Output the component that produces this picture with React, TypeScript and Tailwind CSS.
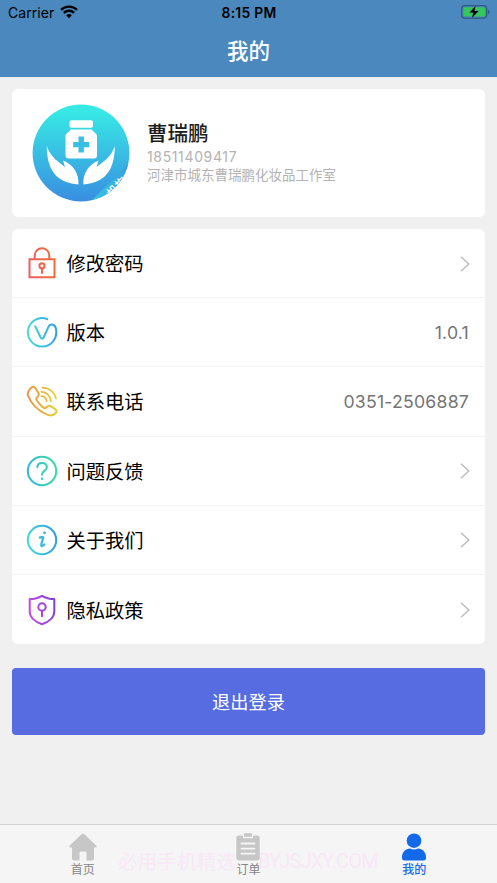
import { type ReactNode } from 'react'

const FONT = "font-['Inter','Noto_Sans_CJK_SC',sans-serif]"

function StatusBar() {
  return (
    <div className="grid h-[25px] grid-cols-3 items-center pl-[8px] pr-[7px] text-black">
      <div className="flex items-center gap-[6px] text-[14px] tracking-[0.05px]">
        <span>Carrier</span>
        <svg className="-mt-px" width="18" height="14" viewBox="0 0 18 14" fill="none" stroke="#000" strokeWidth="2.3">
          <path d="M1 4.8a11.6 11.6 0 0 1 16 0" />
          <path d="M3.8 7.8a7.6 7.6 0 0 1 10.4 0" />
          <path d="M9 13.2 6.2 10.3a4.2 4.2 0 0 1 5.6 0z" fill="#000" stroke="none" />
        </svg>
      </div>
      <div className="pt-[2px] text-center text-[13.8px] font-semibold tracking-[0.3px]">8:15 PM</div>
      <svg className="-mt-px justify-self-end" width="29" height="14" viewBox="0 0 29 14">
        <rect x="0.7" y="0.7" width="25" height="12.4" rx="3.4" fill="none" stroke="#2f5a83" strokeWidth="1.2" />
        <rect x="2.4" y="2.3" width="21.6" height="9.2" rx="1.9" fill="#35c759" />
        <path d="M27 4.7c2 .7 2 3.7 0 4.4z" fill="#2f5a83" />
        <path d="M14.6.8 8.7 7.5h3.8L10.9 13l6.5-7h-4z" fill="#000" stroke="#4a88be" strokeWidth=".8" paintOrder="stroke" />
      </svg>
    </div>
  )
}

function Avatar() {
  return (
    <svg className="shrink-0" width="98" height="98" viewBox="0 0 98 98">
      <defs>
        <linearGradient id="avatar" x1="0" y1="0" x2="0" y2="1">
          <stop offset="0.08" stopColor="#37e8e5" />
          <stop offset="1" stopColor="#398de1" />
        </linearGradient>
        <linearGradient id="ribbon" x1="0" y1="1" x2="1" y2="0">
          <stop stopColor="#35c8e4" />
          <stop offset="0.9" stopColor="#389fe0" />
        </linearGradient>
        <clipPath id="disc">
          <circle cx="49" cy="49" r="48.4" />
        </clipPath>
      </defs>
      <g clipPath="url(#disc)">
        <rect width="98" height="98" fill="url(#avatar)" />
        <path d="M58 98 98 58v40z" fill="url(#ribbon)" />
        <text x="79.5" y="94" transform="rotate(-45 79.5 94)" fill="#fff" fontSize="11.5" fontWeight="500">
          机构
        </text>
      </g>
      <rect x="37.5" y="16.3" width="23.5" height="7.5" rx="2" fill="#fff" />
      <path d="M38.5 25.5h21.500c.5 2 5 3.500 5 6.500v19.500q0 3-3 3H36.500q-3 0-3-3V32c0-3 4.500-4.500 5-6.500z" fill="#fff" />
      <path d="M46.5 32.6h5.400v5.300h5.300v5.300h-5.300v5.300h-5.400v-5.300h-5.300v-5.300h5.300z" fill="#39bee4" />
      <path d="M14.8 42c0 23 9 37 31.700 38.500.5-11-5-20-15.500-24l2 6.500C27 58 19 54 14.800 42z" fill="#fff" />
      <path d="M82.8 42c0 23-9 37-31.500 38.500-.5-11 5-20 15.300-24l-2 6.500C70.600 58 78.600 54 82.800 42z" fill="#fff" />
    </svg>
  )
}

function RowIcon({ id, from, to, children }: { id: string; from: string; to: string; children: ReactNode }) {
  return (
    <svg
      className="shrink-0"
      width="32"
      height="32"
      viewBox="0 0 32 32"
      fill="none"
      stroke={`url(#${id})`}
      strokeWidth="2"
      strokeLinecap="round"
      strokeLinejoin="round"
    >
      <defs>
        <linearGradient id={id} gradientUnits="userSpaceOnUse" x1="2" y1="18" x2="30" y2="14">
          <stop stopColor={from} />
          <stop offset="1" stopColor={to} />
        </linearGradient>
      </defs>
      {children}
    </svg>
  )
}

const ROWS: { label: string; value?: string; icon: ReactNode }[] = [
  {
    label: '修改密码',
    icon: (
      <RowIcon id="lock" from="#ef5d60" to="#ef6c35">
        <path d="M3.5 12.2h25v18h-25z" strokeLinejoin="miter" />
        <path d="M8.7 12V8.500a7.300 7.300 0 0 1 14.600 0V12" />
        <circle cx="16" cy="18.8" r="2.6" />
        <path d="M16 21.5v4.600" />
      </RowIcon>
    ),
  },
  {
    label: '版本',
    value: '1.0.1',
    icon: (
      <RowIcon id="version" from="#48ddd5" to="#31a0e8">
        <path d="M21.200 3.100A14.200 14.200 0 1 0 30.100 14c-.4-5.800-5.800-7.300-7.900-2.600L17.700 21.300q-1.600 3-3.200 0L9.200 10.200" />
      </RowIcon>
    ),
  },
  {
    label: '联系电话',
    value: '0351-2506887',
    icon: (
      <RowIcon id="phone" from="#ee8f49" to="#e3d333">
        <path d="M4.300 3.700c2-2.300 3.500-2.600 5-.6l3 4.700c1 1.700.6 2.900-1 4.200-1.400 1.100-1.200 2.200-.2 3.800 1.800 2.800 3.400 4.600 6 6.600 1.500 1.100 2.600 1 3.800-.4 1.300-1.500 2.500-1.700 4.200-.7l4.400 3c1.700 1.200 1.600 2.400-.2 4.100-2.400 2.300-4.800 2.700-8.200 1.300C11.500 25.500 5.300 19.200 2 10.500c-.9-2.600.4-4.700 2.300-6.800z" />
        <path d="M15.500 11.100c2.900.2 4.900 2.200 5.100 5M15.500 6.900c5.300.2 8.900 4 9.300 9.200M16.500 2.700c6.900.2 12.200 4.500 13.500 10.900" strokeWidth="1.7" />
      </RowIcon>
    ),
  },
  {
    label: '问题反馈',
    icon: (
      <RowIcon id="help" from="#35b9d8" to="#35dda0">
        <circle cx="16" cy="16" r="14.2" />
        <path d="M11.300 12.200c.2-2.800 2-4.300 4.700-4.300s4.900 1.700 4.900 4.200c0 3.900-4.900 3.700-4.900 7.600" />
        <path d="M16 23.700v.3" strokeWidth="2.2" />
      </RowIcon>
    ),
  },
  {
    label: '关于我们',
    icon: (
      <RowIcon id="about" from="#42d9d9" to="#2d9ee0">
        <circle cx="16" cy="16" r="14.2" />
        <path d="M18.500 8.800h.1" strokeWidth="2.8" />
        <path d="M13.900 13.500c1.600-.2 3-.7 3.300-.3.400.6-2.200 6.300-2 8.100.2 1.300 2 .6 3.100-.9" strokeWidth="2.3" />
      </RowIcon>
    ),
  },
  {
    label: '隐私政策',
    icon: (
      <RowIcon id="privacy" from="#cb48e8" to="#7c43d3">
        <path d="M16 1.800c3.600 2.300 7.800 3.300 12.300 3.300v12.100c0 6-5.300 10.800-12.300 13.100-7-2.300-12.300-7.100-12.300-13.100V5.100c4.500 0 8.700-1 12.300-3.300z" />
        <circle cx="16" cy="13" r="3.7" />
        <path d="M16 16.700v5.600" />
      </RowIcon>
    ),
  },
]

function Chevron() {
  return (
    <svg className="-mr-px" width="10" height="16" viewBox="0 0 10 16" fill="none" stroke="#bdbdbd" strokeWidth="1.5">
      <path d="m1 .8 7.800 7.200L1 15.200" />
    </svg>
  )
}

function TabBar() {
  return (
    <nav className="relative h-[59.5px] border-t border-[#d2d2d2] bg-[#f5f5f5]">
      {/* Faint site mark behind the tabs */}
      <div className="absolute left-[118px] top-[23px] flex gap-[22px] whitespace-nowrap text-[19.7px] leading-[28px] text-[#f9e8f6]">
        <span>必用手机精选</span>
        <span className="font-['Roboto',sans-serif] text-[19.5px] tracking-[-0.55px]">BYJSJXY.COM</span>
      </div>
      <div className="relative grid h-full grid-cols-3 pt-[8px] text-[12px] leading-[16px] text-[#858585]">
        <div className="flex flex-col items-center gap-[1.5px]">
          <svg width="28" height="28" viewBox="0 0 28 28" fill="#c7c7c7">
            <path d="M12.600 1.300q1.400-1.200 2.800 0l11.800 11.300q1.200 2-1 2H25v10.900q0 2-2 2h-5.500V20q0-1.500-1.500-1.500h-4q-1.500 0-1.500 1.500v7.500H5q-2 0-2-2V14.600H1.800q-2.200 0-1-2z" />
          </svg>
          <span>首页</span>
        </div>
        <div className="flex flex-col items-center gap-[1.5px]">
          <svg width="24" height="28" viewBox="0 0 24 28" fill="#c7c7c7">
            <path d="M3 2.600h4v1.600q0 1 1 1h8q1 0 1-1V2.600h4q2.700 0 2.700 2.700v19.500q0 2.700-2.700 2.700H3q-2.700 0-2.700-2.700V5.300q0-2.700 2.700-2.700z" />
            <rect x="8" y=".3" width="8" height="3.4" rx=".6" />
            <path d="M5.500 10.500h13M5.500 15.700h13M5.500 20.700h13" stroke="#f5f5f5" strokeWidth="1.8" strokeLinecap="round" />
          </svg>
          <span>订单</span>
        </div>
        <div className="flex flex-col items-center gap-[1.5px] font-medium text-[#1269ea]">
          <svg width="24" height="28" viewBox="0 0 24 28" fill="#1269ea">
            <circle cx="12" cy="7.7" r="7.3" />
            <path d="M8 15.500c2.500 1.300 5.500 1.300 8 0 4.500 0 8 4 8 8.500v1q0 2.500-2.500 2.500h-19Q0 27.500 0 25v-1c0-4.500 3.500-8.500 8-8.500z" />
          </svg>
          <span>我的</span>
        </div>
      </div>
    </nav>
  )
}

export default function App() {
  return (
    <div className={`flex h-[883px] w-[497px] flex-col overflow-hidden bg-[#f0f0f0] ${FONT}`}>
      <header className="h-[77px] shrink-0 bg-[#4a88be]">
        <StatusBar />
        <h1 className="text-center text-[21.5px] font-medium leading-[52px] text-white">我的</h1>
      </header>

      <main className="flex flex-1 flex-col px-3 pt-3">
        <section className="flex h-[128px] items-center rounded-md bg-white pl-5">
          <Avatar />
          <div className="ml-[17px] flex flex-col pb-[2px]">
            <h2 className="text-[20.5px] font-medium leading-[27px] text-[#1c1c1c]">曹瑞鹏</h2>
            <p className="text-[14px] leading-[19px] tracking-[0.64px] text-[#b3b3b3]">18511409417</p>
            <p className="text-[13.5px] leading-[19px] text-[#b3b3b3]">河津市城东曹瑞鹏化妆品工作室</p>
          </div>
        </section>

        <ul className="mt-3 rounded-md bg-white">
          {ROWS.map(({ label, value, icon }) => (
            <li
              key={label}
              className="flex h-[69.2px] items-center border-b border-[#f3f3f3] pl-[13.5px] pr-4 last:border-b-0"
            >
              {icon}
              <span className="ml-[9px] mt-[2px] text-[19.3px] leading-[28px] text-black">{label}</span>
              <span className="ml-auto mt-px text-[17.7px] tracking-[0.2px] text-[#757575]">
                {value ?? <Chevron />}
              </span>
            </li>
          ))}
        </ul>

        <button className="mt-[24px] h-[66.5px] rounded bg-[#566ce0] pt-[2px] text-[18.2px] text-white">
          退出登录
        </button>
      </main>

      <TabBar />
    </div>
  )
}
